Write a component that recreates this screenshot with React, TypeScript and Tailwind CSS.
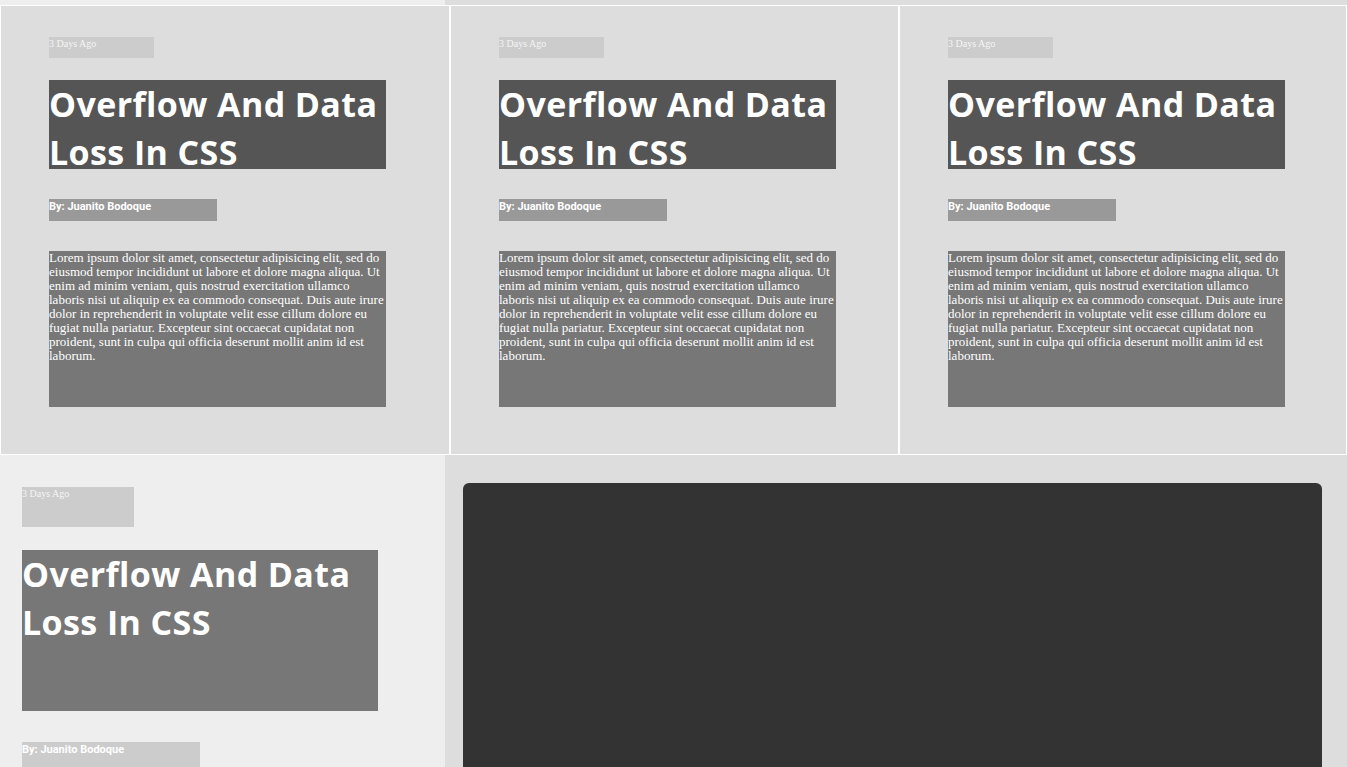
const lorem =
  'Lorem ipsum dolor sit amet, consectetur adipisicing elit, sed do eiusmod tempor incididunt ut labore et dolore magna aliqua. Ut enim ad minim veniam, quis nostrud exercitation ullamco laboris nisi ut aliquip ex ea commodo consequat. Duis aute irure dolor in reprehenderit in voluptate velit esse cillum dolore eu fugiat nulla pariatur. Excepteur sint occaecat cupidatat non proident, sunt in culpa qui officia deserunt mollit anim id est laborum.';

const serif = "font-['Liberation_Serif',serif]";
const heading = "font-['Open_Sans',sans-serif]";
const byline = "font-['Roboto',sans-serif]";

const Card = () => (
  <div className="h-[450px] border border-white bg-[#ddd] pl-[48px] pt-[31px]">
    {/* Date */}
    <div className={`h-[21px] w-[105px] bg-[#ccc] text-[10px] leading-[13px] text-[#f5f5f5] ${serif}`}>
      3 Days Ago
    </div>

    {/* Title */}
    <div className="mt-[22px] h-[89px] w-[337px] bg-[#555]">
      <h2 className={`text-[34px] leading-[48px] tracking-[0.4px] font-bold text-white ${heading}`}>
        Overflow And Data Loss In CSS
      </h2>
    </div>

    {/* Author */}
    <div className={`mt-[30px] h-[22px] w-[168px] bg-[#999] text-[11px] leading-[15px] font-bold text-white ${byline}`}>
      By: Juanito Bodoque
    </div>

    {/* Body */}
    <div className="mt-[30px] h-[156px] w-[337px] bg-[#777]">
      <p className={`text-[13px] leading-[14px] text-white ${serif}`}>{lorem}</p>
    </div>
  </div>
);

export default function App() {
  return (
    <div className="w-[1347px] h-[767px] overflow-hidden bg-white">
      {/* Tail of the previous section */}
      <div className="flex h-[5px]">
        <div className="w-[445px] bg-[#eee]" />
        <div className="flex-1 bg-[#ddd]" />
      </div>

      {/* Card grid */}
      <div className="grid grid-cols-[450px_449px_448px]">
        <Card />
        <Card />
        <Card />
      </div>

      {/* Featured section */}
      <div className="flex h-[600px]">
        <div className="w-[445px] bg-[#eee] pl-[22px] pt-[32px]">
          <div className={`h-[40px] w-[112px] bg-[#ccc] text-[10px] leading-[13px] text-[#f5f5f5] ${serif}`}>
            3 Days Ago
          </div>
          <div className="mt-[23px] h-[161px] w-[356px] bg-[#777]">
            <h2 className={`text-[34px] leading-[48px] tracking-[0.4px] font-bold text-white ${heading}`}>
              Overflow And Data Loss In CSS
            </h2>
          </div>
          <div className={`mt-[31px] h-[40px] w-[178px] bg-[#ccc] text-[11px] leading-[15px] font-bold text-white ${byline}`}>
            By: Juanito Bodoque
          </div>
        </div>
        <div className="flex-1 bg-[#ddd] pl-[18px] pt-[28px]">
          <div className="h-[500px] w-[859px] rounded-[6px] bg-[#333]" />
        </div>
      </div>
    </div>
  );
}
